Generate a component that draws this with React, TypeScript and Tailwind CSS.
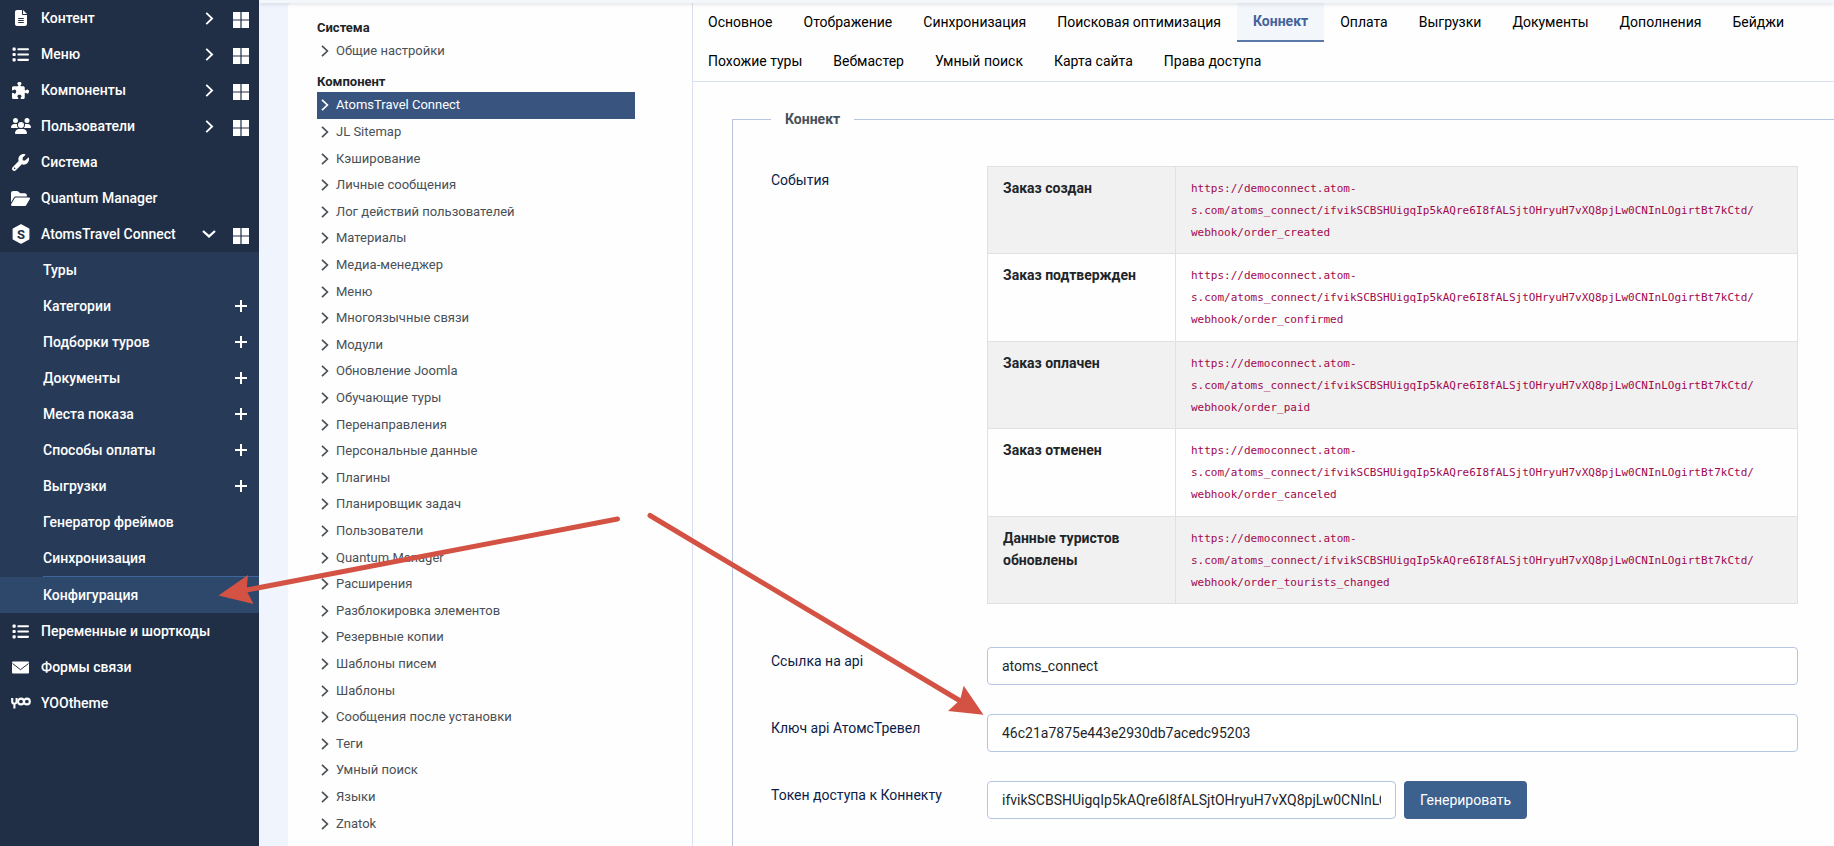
import React from "react";
import {
  FaFileLines,
  FaList,
  FaPuzzlePiece,
  FaUsers,
  FaWrench,
  FaFolderOpen,
} from "react-icons/fa6";

type IconProps = { className?: string };

const Chevron = ({ className }: IconProps) => (
  <svg viewBox="0 0 8 12" className={className} fill="none" stroke="currentColor" strokeWidth="1.7" aria-hidden="true">
    <path d="M1 .8l5.400 5.200L1 11.200" />
  </svg>
);

const ChevronDown = () => (
  <svg viewBox="0 0 14 8" className="h-2 w-[14px]" fill="none" stroke="currentColor" strokeWidth="2.2" aria-hidden="true">
    <path d="M1 1l6 5.4L13 1" />
  </svg>
);

const GridIcon = () => (
  <svg viewBox="0 0 16 16" className="size-4" fill="currentColor" aria-hidden="true">
    <path d="M0 0h7.4v7.4H0zM8.6 0H16v7.4H8.6zM0 8.6h7.4V16H0zM8.6 8.6H16V16H8.6z" />
  </svg>
);

const PlusIcon = () => (
  <svg viewBox="0 0 12 12" className="size-3" stroke="currentColor" strokeWidth="2" aria-hidden="true">
    <path d="M6 0v12M0 6h12" />
  </svg>
);

const MailIcon = () => (
  <svg viewBox="0 0 17 13" className="h-[13px] w-[17px]" aria-hidden="true">
    <rect width="17" height="12" y="0.5" rx="1" fill="currentColor" />
    <path d="M.5 2.5l8 6.2 8-6.2" fill="none" stroke="#212f46" strokeWidth="1" />
  </svg>
);

const HexIcon = () => (
  <svg viewBox="0 0 18 20" className="h-5 w-[18px]" aria-hidden="true">
    <path d="M9 .8l7.8 4.3v9.8L9 19.2l-7.800-4.300V5.100z" fill="currentColor" stroke="currentColor" strokeWidth="1.200" strokeLinejoin="round" />
    <text x="9" y="14.600" textAnchor="middle" fontSize="13" fontWeight="700" fontFamily="Roboto, sans-serif" fill="#212f46">
      S
    </text>
  </svg>
);

const YooIcon = () => (
  <svg viewBox="0 0 20 12" className="h-3 w-5" fill="none" stroke="currentColor" strokeWidth="2.100" aria-hidden="true">
    <path d="M1.200 1v3.500a2.200 2.200 0 0 0 4.400 0V1M3.400 6.500v5" />
    <circle cx="10" cy="4.500" r="2.900" />
    <circle cx="15.900" cy="4.500" r="2.900" />
  </svg>
);

type MenuEntry = { label: string; icon: React.ReactNode; more?: boolean };

const topMenu: MenuEntry[] = [
  { label: "Контент", icon: <FaFileLines size={16} />, more: true },
  { label: "Меню", icon: <FaList size={17} />, more: true },
  { label: "Компоненты", icon: <FaPuzzlePiece size={17} />, more: true },
  { label: "Пользователи", icon: <FaUsers size={20} />, more: true },
  { label: "Система", icon: <FaWrench size={17} /> },
  { label: "Quantum Manager", icon: <FaFolderOpen size={19} /> },
];

const subMenu = [
  { label: "Туры" },
  { label: "Категории", add: true },
  { label: "Подборки туров", add: true },
  { label: "Документы", add: true },
  { label: "Места показа", add: true },
  { label: "Способы оплаты", add: true },
  { label: "Выгрузки", add: true },
  { label: "Генератор фреймов" },
  { label: "Синхронизация" },
];

const bottomMenu: MenuEntry[] = [
  { label: "Переменные и шорткоды", icon: <FaList size={17} /> },
  { label: "Формы связи", icon: <MailIcon /> },
  { label: "YOOtheme", icon: <YooIcon /> },
];

const components = [
  "AtomsTravel Connect",
  "JL Sitemap",
  "Кэширование",
  "Личные сообщения",
  "Лог действий пользователей",
  "Материалы",
  "Медиа-менеджер",
  "Меню",
  "Многоязычные связи",
  "Модули",
  "Обновление Joomla",
  "Обучающие туры",
  "Перенаправления",
  "Персональные данные",
  "Плагины",
  "Планировщик задач",
  "Пользователи",
  "Quantum Manager",
  "Расширения",
  "Разблокировка элементов",
  "Резервные копии",
  "Шаблоны писем",
  "Шаблоны",
  "Сообщения после установки",
  "Теги",
  "Умный поиск",
  "Языки",
  "Znatok",
];

const tabs = [
  "Основное",
  "Отображение",
  "Синхронизация",
  "Поисковая оптимизация",
  "Коннект",
  "Оплата",
  "Выгрузки",
  "Документы",
  "Дополнения",
  "Бейджи",
  "Похожие туры",
  "Вебмастер",
  "Умный поиск",
  "Карта сайта",
  "Права доступа",
];

const token = "ifvikSCBSHUigqIp5kAQre6I8fALSjtOHryuH7vXQ8pjLw0CNInLOgirtBt7kCtd";

const events = [
  { name: "Заказ создан", hook: "order_created" },
  { name: "Заказ подтвержден", hook: "order_confirmed" },
  { name: "Заказ оплачен", hook: "order_paid" },
  { name: "Заказ отменен", hook: "order_canceled" },
  { name: "Данные туристов обновлены", hook: "order_tourists_changed" },
];

function MenuRow({ label, icon, more }: MenuEntry) {
  return (
    <li className="flex h-9 items-center pr-[10px]">
      <a href="#" className="flex flex-1 items-center">
        <span className="flex w-[41px] justify-center">{icon}</span>
        {label}
      </a>
      {more && (
        <>
          <Chevron className="mr-[19px] h-[13px] w-[9px]" />
          <a href="#" aria-label={label} className="pt-[3px]">
            <GridIcon />
          </a>
        </>
      )}
    </li>
  );
}

function Sidebar() {
  return (
    <nav className="w-[259px] shrink-0 bg-[#212f46] text-[14px] font-medium text-white">
      <ul>
        {topMenu.map((m) => (
          <MenuRow key={m.label} {...m} />
        ))}
        <li>
          <div className="flex h-9 items-center pr-[10px]">
            <a href="#" className="flex flex-1 items-center">
              <span className="flex w-[41px] justify-center">
                <HexIcon />
              </span>
              AtomsTravel Connect
            </a>
            <span className="mr-[17px]">
              <ChevronDown />
            </span>
            <a href="#" aria-label="AtomsTravel Connect" className="pt-[3px]">
              <GridIcon />
            </a>
          </div>
          <ul className="bg-[#273b59]">
            {subMenu.map((s) => (
              <li key={s.label} className="flex h-9 items-center pr-3 pl-[43px]">
                <a href="#" className="flex-1">
                  {s.label}
                </a>
                {s.add && (
                  <a href="#" aria-label={"Добавить: " + s.label}>
                    <PlusIcon />
                  </a>
                )}
              </li>
            ))}
            <li>
              <div className="ml-[43px] h-px bg-[#3f669c]" />
              <a href="#" className="flex h-9 items-center bg-[#2e486c] pl-[43px]">
                Конфигурация
              </a>
            </li>
          </ul>
        </li>
        {bottomMenu.map((m) => (
          <MenuRow key={m.label} {...m} />
        ))}
      </ul>
    </nav>
  );
}

function ComponentItem({ label, active }: { label: string; active?: boolean }) {
  return (
    <li className={active ? "bg-[#38547f] text-white" : "text-[#495057]"}>
      <a href="#" className="flex h-full items-center gap-[7px] pl-1">
        <Chevron className="h-3 w-2" />
        {label}
      </a>
    </li>
  );
}

function ComponentList() {
  return (
    <aside className="w-[405px] shrink-0 border-r border-[#d9e1f0] pt-[15px] pr-[57px] pl-[29px] text-[13px] leading-5">
      <h2 className="font-bold text-[#212529]">Система</h2>
      <ul className="grid auto-rows-[26px]">
        <ComponentItem label="Общие настройки" />
      </ul>
      <h2 className="mt-2 font-bold text-[#212529]">Компонент</h2>
      <ul className="grid min-h-[745px] auto-rows-fr">
        {components.map((c, i) => (
          <ComponentItem key={c} label={c} active={i === 0} />
        ))}
      </ul>
    </aside>
  );
}

function EventsTable() {
  return (
    <table className="h-[438px] w-full border-collapse text-[14px] leading-[22px] text-[#212529]">
      <tbody>
        {events.map((e) => (
          <tr key={e.name} className="align-top odd:bg-[#f1f1f1]">
            <th scope="row" className="w-[188px] border border-[#dee2e6] px-[15px] py-[10px] text-left font-bold">
              {e.name}
            </th>
            <td className="border border-[#dee2e6] px-[15px] pt-[11px] pb-[9px]">
              <code className="block font-['DejaVu_Sans_Mono',monospace] text-[11px] leading-[22px] text-[#a0094f]">
                https://democonnect.atom-
                <br />
                s.com/atoms_connect/{token}/
                <br />
                webhook/{e.hook}
              </code>
            </td>
          </tr>
        ))}
      </tbody>
    </table>
  );
}

const inputClass =
  "h-[38px] rounded-[4px] border border-[#b7c6e0] bg-white px-[14px] text-[14px] text-[#22262a] outline-none";
const labelClass = "w-[216px] shrink-0 pt-[3px] text-[14px] leading-[22px] text-[#0b1c48]";

function ConnectPanel() {
  return (
    <fieldset className="-mr-2 ml-[39px] mt-[25px] border border-[#b7c6e0] px-[38px] pb-20">
      <legend className="px-[14px] text-[14px] leading-[24px] font-bold text-[#495057]">Коннект</legend>
      <div className="flex flex-col gap-[29px] pt-[35px] pr-[5px]">
        <div className="flex pb-[14px]">
          <div className={labelClass}>События</div>
          <div className="flex-1">
            <EventsTable />
          </div>
        </div>
        <div className="flex">
          <label htmlFor="api-link" className={labelClass}>
            Ссылка на api
          </label>
          <input id="api-link" type="text" defaultValue="atoms_connect" className={"flex-1 " + inputClass} />
        </div>
        <div className="flex">
          <label htmlFor="api-key" className={labelClass}>
            Ключ api АтомсТревел
          </label>
          <input id="api-key" type="text" defaultValue="46c21a7875e443e2930db7acedc95203" className={"flex-1 " + inputClass} />
        </div>
        <div className="flex">
          <label htmlFor="token" className={labelClass}>
            Токен доступа к Коннекту
          </label>
          <input id="token" type="text" defaultValue={token} className={"w-[409px] " + inputClass} />
          <button type="button" className="ml-2 h-[38px] rounded-[4px] bg-[#3d618f] px-4 text-[14px] text-white">
            Генерировать
          </button>
        </div>
      </div>
    </fieldset>
  );
}

function Arrows() {
  return (
    <svg
      className="pointer-events-none absolute top-0 left-0"
      width="1834"
      height="846"
      viewBox="0 0 1834 846"
      fill="#d35244"
      stroke="#d35244"
      aria-hidden="true"
    >
      <path d="M617.500 519L244 590.500M650 515.500L962 702" strokeWidth="5" strokeLinecap="round" />
      <path d="M218.500 595.500L248 575L246.500 590.500L253.500 604z" stroke="none" />
      <path d="M983.500 714.700L963.700 685.700L960 700L948 711z" stroke="none" />
    </svg>
  );
}

export default function App() {
  return (
    <div className="relative flex h-screen overflow-hidden bg-[#f0f4fd] font-[Roboto,sans-serif]">
      <Sidebar />
      <div className="flex min-w-0 flex-1 flex-col">
        <div className="z-10 h-[3px] shrink-0 bg-[#f3f6fa] shadow-[0_1px_4px_rgba(0,0,0,0.15)]" />
        <main className="ml-[29px] flex min-h-0 flex-1 rounded-tl-[4px] bg-[#fefefe]">
          <ComponentList />
          <section className="min-w-0 flex-1 overflow-hidden">
            <div role="tablist" className="flex flex-wrap gap-x-px border-b border-[#d9e1f0] pr-8 text-[14px] text-black">
              {tabs.map((t) => (
                <button
                  key={t}
                  type="button"
                  role="tab"
                  aria-selected={t === "Коннект"}
                  className={
                    t === "Коннект"
                      ? "h-[39px] border-b-2 border-[#5a78a8] bg-[#f3f6fa] px-4 font-bold text-[#45639a]"
                      : "h-[39px] px-[15px]"
                  }
                >
                  {t}
                </button>
              ))}
            </div>
            <ConnectPanel />
          </section>
        </main>
      </div>
      <Arrows />
    </div>
  );
}
